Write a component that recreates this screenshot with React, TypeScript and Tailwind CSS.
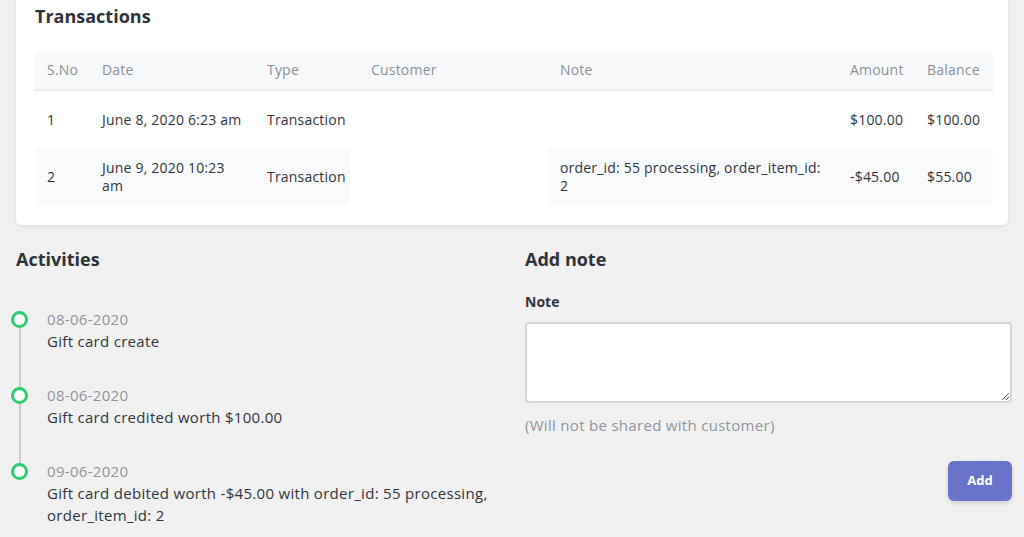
const font = { fontFamily: '"Open Sans", "Noto Sans", sans-serif' }

type Row = {
  no: string
  date: string
  type: string
  customer: string
  note: string
  amount: string
  balance: string
}

const rows: Row[] = [
  { no: '1', date: 'June 8, 2020 6:23 am', type: 'Transaction', customer: '', note: '', amount: '$100.00', balance: '$100.00' },
  {
    no: '2',
    date: 'June 9, 2020 10:23 am',
    type: 'Transaction',
    customer: '',
    note: 'order_id: 55 processing, order_item_id: 2',
    amount: '-$45.00',
    balance: '$55.00',
  },
]

const activities = [
  { date: '08-06-2020', text: 'Gift card create' },
  { date: '08-06-2020', text: 'Gift card credited worth $100.00' },
  { date: '09-06-2020', text: 'Gift card debited worth -$45.00 with order_id: 55 processing, order_item_id: 2' },
]

function Transactions() {
  return (
    <section className="mx-4 rounded-b-[5px] bg-white px-[19px] pt-1 pb-[19px] shadow-[0_1px_4px_rgba(0,0,0,0.08)]">
      <h2 className="mb-[23px] text-[18px] leading-6 font-bold text-[#2f3237]">Transactions</h2>
      <table className="w-full table-fixed border-collapse text-left text-[14px] leading-[18px] tracking-[0.2px]">
        <colgroup>
          <col className="w-[55px]" />
          <col className="w-[165px]" />
          <col className="w-[95px]" />
          <col className="w-[198px]" />
          <col className="w-[290px]" />
          <col className="w-[77px]" />
          <col className="w-[78px]" />
        </colgroup>
        <thead>
          <tr className="h-[39px] border-b-2 border-[#e9ebef] bg-[#f8f9fb] text-[#8b9097]">
            <th className="px-3 font-normal">S.No</th>
            <th className="px-3 font-normal">Date</th>
            <th className="px-3 font-normal">Type</th>
            <th className="pr-3 pl-[21px] font-normal">Customer</th>
            <th className="px-3 font-normal">Note</th>
            <th className="px-3 font-normal">Amount</th>
            <th className="px-3 font-normal">Balance</th>
          </tr>
        </thead>
        <tbody className="text-[#30353c]">
          {rows.map((r, i) => {
            const stripe = i % 2 === 1 ? 'bg-[#f9fafc]' : ''
            return (
              <tr key={r.no} className="h-[58px]">
                <td className={`px-3 py-[11px] ${stripe}`}>{r.no}</td>
                <td className={`px-3 py-[11px] ${stripe}`}>{r.date}</td>
                <td className={`py-[11px] pl-3 whitespace-nowrap ${stripe}`}>{r.type}</td>
                <td className="py-[11px] pr-3 pl-[21px]">{r.customer}</td>
                <td className={`py-[11px] pr-4 pl-3 ${stripe}`}>{r.note}</td>
                <td className={`px-3 py-[11px] whitespace-nowrap ${stripe}`}>{r.amount}</td>
                <td className={`px-3 py-[11px] whitespace-nowrap ${stripe}`}>{r.balance}</td>
              </tr>
            )
          })}
        </tbody>
      </table>
    </section>
  )
}

function Activities() {
  return (
    <section>
      <h2 className="mb-[37px] text-[18px] leading-6 font-bold text-[#2f3237]">Activities</h2>
      <ul>
        {activities.map((a, i) => {
          const last = i === activities.length - 1
          return (
            <li key={i} className={`relative flex ${last ? '' : 'pb-[32px]'}`}>
              {!last && <span className="absolute top-[19px] bottom-[-4px] left-[2.5px] w-[2px] bg-[#c6cdd6]" />}
              <div className="relative w-[31px] shrink-0">
                <span className="absolute top-[3px] left-[-5px] z-10 block size-[17px] rounded-full border-[3px] border-[#2fcb71] bg-white" />
              </div>
              <div className="text-[15px] leading-[22px] tracking-[0.3px]">
                <div className="text-[#8f949b]">{a.date}</div>
                <div className="text-[#30353c]">{a.text}</div>
              </div>
            </li>
          )
        })}
      </ul>
    </section>
  )
}

function AddNote() {
  return (
    <section>
      <h2 className="mb-5 text-[18px] leading-6 font-bold text-[#2f3237]">Add note</h2>
      <label className="mb-[9px] block text-[14px] leading-[22px] font-bold text-[#2f3237]">Note</label>
      <textarea className="block h-[81px] w-full resize-y rounded-[4px] border-2 border-[#d2d6dc] bg-white" />
      <p className="mt-[11px] text-[15px] leading-[22px] tracking-[0.3px] text-[#8f949b]">(Will not be shared with customer)</p>
      <div className="mt-[25px] flex justify-end">
        <button className="h-10 w-16 rounded-[6px] bg-[#6873c9] text-[13px] font-bold text-white shadow-[0_2px_4px_rgba(0,0,0,0.15)]">
          Add
        </button>
      </div>
    </section>
  )
}

export default function App() {
  return (
    <div style={font} className="min-h-[537px] overflow-hidden bg-[#f1f1f1]">
      <Transactions />
      <div className="mt-[22px] grid grid-cols-[493px_1fr] gap-4 pr-3 pl-4">
        <Activities />
        <AddNote />
      </div>
    </div>
  )
}
